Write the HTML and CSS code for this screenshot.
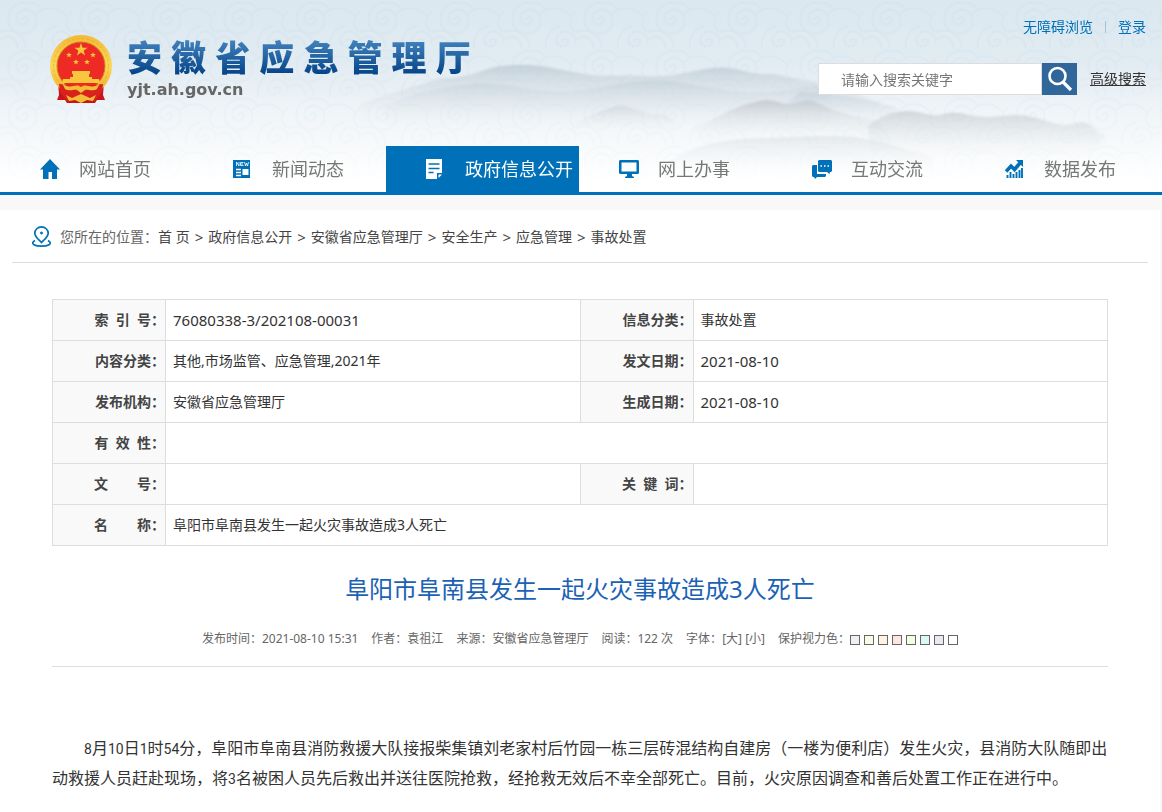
FILE: index.html
```html
<!DOCTYPE html>
<html lang="zh-CN">
<head>
<meta charset="utf-8">
<title>阜阳市阜南县发生一起火灾事故造成3人死亡</title>
<link rel="stylesheet" href="styles.css">
</head>
<body>
<header class="header">
  <svg class="scenery" viewBox="0 0 1162 192" preserveAspectRatio="xMidYMin slice" aria-hidden="true">
    <defs>
      <pattern id="swirl" width="72" height="48" patternUnits="userSpaceOnUse">
        <g fill="none" stroke="#cbdde8" stroke-width="2">
          <path d="M22 20c0-4 6-4 6 0s-8 7-11 1 4-13 11-11 11 10 7 17-15 9-22 3-6-20 3-25 22-3 27 6"/>
          <path d="M58 42c0-4 6-4 6 0s-8 7-11 1 4-13 11-11 8 8 8 12M42 48c-2-10 4-20 14-22M36 14c8-8 22-8 30 2"/>
          <path d="M0 40c6-6 16-4 18 8M0 32c10-4 24 0 26 16M72 32c-8-4-8-14 0-20"/>
        </g>
      </pattern>
      <linearGradient id="fadeSwirl" x1="0" y1="0" x2="0" y2="1">
        <stop offset="0" stop-color="#fff" stop-opacity=".3"/>
        <stop offset="1" stop-color="#fff" stop-opacity="0"/>
      </linearGradient>
      <mask id="swirlMask"><rect width="1162" height="192" fill="url(#fadeSwirl)"/></mask>
      <linearGradient id="far" x1="0" y1="0" x2="0" y2="1">
        <stop offset="0" stop-color="#bac8d2" stop-opacity=".75"/>
        <stop offset="1" stop-color="#eef2f5" stop-opacity="0"/>
      </linearGradient>
      <linearGradient id="near" x1="0" y1="0" x2="0" y2="1">
        <stop offset="0" stop-color="#b9c0c6" stop-opacity=".7"/>
        <stop offset="1" stop-color="#f4f6f7" stop-opacity="0"/>
      </linearGradient>
      <filter id="mist" x="-5%" y="-20%" width="110%" height="140%"><feGaussianBlur stdDeviation="1.2"/></filter>
    </defs>
    <rect width="1162" height="192" fill="url(#swirl)" mask="url(#swirlMask)"/>
    <g filter="url(#mist)">
      <path fill="url(#far)" d="M360 104C385 94 405 90 425 83S460 79 476 73 500 65 523 65 560 70 585 74 620 74 645 76 690 71 712 68 745 74 765 74 800 82 830 84L830 126H360Z"/>
      <path fill="url(#far)" opacity=".6" d="M385 106C410 92 440 88 470 84S540 96 580 90 650 76 690 84 760 96 800 88 860 98 895 108L905 130H385Z"/>
      <path fill="url(#near)" opacity=".55" d="M565 130C580 120 595 112 613 107S640 116 665 114L690 134Z"/>
      <path fill="url(#near)" d="M695 128C720 117 735 104 767 100 780 101 785 106 795 103S812 99 820 104 850 116 880 121L892 142H690Z"/>
      <path fill="url(#near)" opacity=".8" d="M868 126C880 116 895 111 908 111S930 118 945 114 970 118 990 117 1020 113 1040 119 1060 127 1076 123 1095 134 1105 136L1090 160H870Z"/>
      <path fill="url(#far)" opacity=".7" d="M800 92C840 94 865 98 895 108L900 126H760Z"/>
      <path fill="url(#near)" opacity=".38" d="M670 160C700 142 730 139 765 138S830 134 860 138 900 150 930 156L940 176H660Z"/>
    </g>
  </svg>
  <div class="banner">
    <a class="brand" href="#">
      <svg class="emblem" viewBox="0 0 64 68" aria-hidden="true">
        <defs><linearGradient id="gold" x1="0" y1="0" x2="0" y2="1"><stop offset="0" stop-color="#f3b936"/><stop offset=".5" stop-color="#fbd857"/><stop offset="1" stop-color="#eda825"/></linearGradient></defs>
        <path fill="#c91418" d="M9 47l1 13-2 5 8 0 2 3h28l2-3h8l-2-5 1-13z"/>
        <circle cx="32" cy="31" r="31" fill="url(#gold)"/>
        <circle cx="32" cy="31" r="27.500" fill="none" stroke="#dea02a" stroke-opacity=".5" stroke-width="1" stroke-dasharray="3 2"/>
        <circle cx="32" cy="31" r="24" fill="#ed2b24" stroke="#c9841b" stroke-width="1"/>
        <g fill="#f9c63d">
          <path d="M32 8l1.600 4.700h5l-4 3 1.500 4.800-4.100-2.900-4.100 2.900 1.500-4.800-4-3h5z"/>
          <path d="M20 17l.7 2h2.200l-1.700 1.400.6 2.200-1.800-1.300-1.800 1.300.6-2.200-1.700-1.400h2.200zM44 17l.7 2h2.200l-1.700 1.400.6 2.200-1.800-1.300-1.800 1.300.6-2.200-1.700-1.400h2.200zM27 24l.7 2h2.200l-1.700 1.400.6 2.200-1.800-1.300-1.800 1.300.6-2.200-1.700-1.400h2.200zM38 24l.7 2h2.200l-1.700 1.400.6 2.200-1.800-1.300-1.800 1.300.6-2.200-1.700-1.400h2.200z"/>
          <path d="M23 36h18v3h-1v3h3v2h7l1 4H13l1-4h7v-2h3v-3h-1z"/>
        </g>
        <path fill="#d9211e" d="M10 49l12 1 10 3 10-3 12-1-1 8-7 9-6-4-8 2-8-2-6 4-7-9z"/>
        <path fill="#f4bd36" d="M13 48c7 7 13 1 17 3l2 1 2-1c4-2 10 4 17-3l-3 6c-5 3-9 0-12 1l-4 3-4-3c-3-1-7 2-12-1zM17 60l6 3 9-4 9 4 6-3-3 6-6-1-6 3-6-3-6 1z"/>
      </svg>
      <span class="brand-text">
        <span class="brand-name">安 徽 省 应 急 管 理 厅</span>
        <span class="brand-domain">yjt.ah.gov.cn</span>
      </span>
    </a>
    <div class="tools">
      <div class="top-links"><a href="#">无障碍浏览</a><i class="bar"></i><a href="#">登录</a></div>
      <form class="search">
        <input class="search-box" type="text" placeholder="请输入搜索关键字" aria-label="请输入搜索关键字">
        <button class="search-btn" type="button" aria-label="搜索">
          <svg width="26" height="26" viewBox="0 0 26 26" fill="none" stroke="#fff"><circle cx="10.500" cy="10" r="8" stroke-width="2.600"/><path d="M16 16l8 8" stroke-width="3.200"/></svg>
        </button>
        <a class="advanced" href="#">高级搜索</a>
      </form>
    </div>
  </div>
  <nav class="nav">
    <a href="#"><svg viewBox="0 0 20 20" fill="currentColor"><path d="M10 0l10 10.500h-3V20h-5v-7H8.500v7H3v-9.500H0z"/></svg>网站首页</a>
    <a href="#"><svg viewBox="0 0 20 20"><path fill="currentColor" d="M0 1h17v18H0z"/><g fill="none" stroke="#fff"><path d="M3.500 7V3l2.500 4V3M10.500 3.500h-3v3h3M7.500 5h2.500M11.500 3l1 4 1-3 1 3 1-4" stroke-width=".8"/><path d="M3 10.500h5M3 13.500h5M3 16.500h5" stroke-width="1.300"/></g><path fill="#fff" d="M9.500 10h6v6h-6z"/></svg>新闻动态</a>
    <a class="active" href="#"><svg viewBox="0 0 20 20"><path fill="currentColor" d="M0 0h16v14h-5v6H0zM12.500 15.500H16L12.500 19z"/><path d="M2.500 5h11M2.500 9.500h11M2.500 13.500h5" stroke="#0071b8" stroke-width="1.500"/></svg>政府信息公开</a>
    <a href="#"><svg viewBox="0 0 20 20" fill="currentColor"><path fill-rule="evenodd" d="M1 1h18l1 1v12l-1 1h-6v2l2 1v1H6v-1l2-1v-2H1l-1-1V2zM2.500 3.500v9h15v-9z"/></svg>网上办事</a>
    <a href="#"><svg viewBox="0 0 20 20"><path fill="currentColor" d="M0 7l1-1h4v9h9v2l-1 1H5l-2 2-1-2H1l-1-1z"/><path fill="currentColor" d="M7 1h12l1 1v10l-1 1h-1l-.5 2-2.500-2H7l-1-1V2z"/><path d="M8.500 7h9" stroke="#fff" stroke-width="1.500" stroke-dasharray="1.500 2"/></svg>互动交流</a>
    <a href="#"><svg viewBox="0 0 20 20" fill="none" stroke="currentColor"><path d="M1 12.500l5-5.500 3.500 3.500L15 4" stroke-width="3.600"/><path d="M11 1h7v7z" fill="currentColor" stroke="none"/><path d="M2.500 19v-3M5.500 19v-6M8.500 19v-4M11.500 19v-6M14.500 19v-8M17 19V9" stroke-width="1.900"/></svg>数据发布</a>
  </nav>
</header>
<main class="page">
  <div class="crumbs">
    <svg width="20" height="22" viewBox="0 0 20 22" fill="none" stroke="#0071b8" stroke-width="1.700"><path d="M9.500 16.500C6 13 2.800 10.500 2.800 7.200a6.700 6.300 0 0 1 13.400 0c0 3.300-3.200 5.800-6.700 9.300z"/><circle cx="9.500" cy="7" r="1" fill="#0071b8" stroke-width="1"/><path d="M3 14.500c-6 3.500 1 5.700 6.500 5.700s12.500-2.200 6.500-5.700"/></svg>
    <span class="crumb-label">您所在的位置：</span>
    <a href="#">首 页</a><span class="sep">&gt;</span><a href="#">政府信息公开</a><span class="sep">&gt;</span><a href="#">安徽省应急管理厅</a><span class="sep">&gt;</span><a href="#">安全生产</a><span class="sep">&gt;</span><a href="#">应急管理</a><span class="sep">&gt;</span><a href="#">事故处置</a>
  </div>
  <article class="content">
    <table class="info">
      <colgroup><col class="c-label"><col><col class="c-label"><col></colgroup>
      <tr><th>索&nbsp; 引&nbsp; 号：</th><td class="num">76080338-3/202108-00031</td><th>信息分类：</th><td>事故处置</td></tr>
      <tr><th>内容分类：</th><td>其他,市场监管、应急管理,2021年</td><th>发文日期：</th><td class="num">2021-08-10</td></tr>
      <tr><th>发布机构：</th><td>安徽省应急管理厅</td><th>生成日期：</th><td class="num">2021-08-10</td></tr>
      <tr><th>有&nbsp; 效&nbsp; 性：</th><td colspan="3"></td></tr>
      <tr><th>文&nbsp;&nbsp;&nbsp;&nbsp;&nbsp;&nbsp;&nbsp; 号：</th><td></td><th>关&nbsp; 键&nbsp; 词：</th><td></td></tr>
      <tr><th>名&nbsp;&nbsp;&nbsp;&nbsp;&nbsp;&nbsp;&nbsp; 称：</th><td colspan="3">阜阳市阜南县发生一起火灾事故造成3人死亡</td></tr>
    </table>
    <h1 class="title">阜阳市阜南县发生一起火灾事故造成3人死亡</h1>
    <div class="meta">
      <span>发布时间：2021-08-10 15:31</span>
      <span>作者：袁祖江</span>
      <span>来源：安徽省应急管理厅</span>
      <span>阅读：122 次</span>
      <span>字体：<a href="#">[大]</a> <a href="#">[小]</a></span>
      <span class="eye">保护视力色：<span class="swatches"><button class="sw s1" aria-label="色1"></button><button class="sw s2" aria-label="色2"></button><button class="sw s3" aria-label="色3"></button><button class="sw s4" aria-label="色4"></button><button class="sw s5" aria-label="色5"></button><button class="sw s6" aria-label="色6"></button><button class="sw s7" aria-label="色7"></button><button class="sw s8" aria-label="色8"></button></span></span>
    </div>
    <p class="body-text"><span class="fig">8</span>月<span class="fig">10</span>日<span class="fig">1</span>时<span class="fig">54</span>分，阜阳市阜南县消防救援大队接报柴集镇刘老家村后竹园一栋三层砖混结构自建房（一楼为便利店）发生火灾，县消防大队随即出动救援人员赶赴现场，将<span class="fig">3</span>名被困人员先后救出并送往医院抢救，经抢救无效后不幸全部死亡。目前，火灾原因调查和善后处置工作正在进行中。</p>
  </article>
</main>
</body>
</html>
```
FILE: styles.css
```css
* { box-sizing: border-box; }
html { height: 100%; }
body {
  margin: 0;
  min-height: 100%;
  display: flex;
  flex-direction: column;
  background: #f8f8f8;
  color: #333;
  font: 14px/20px "Noto Sans", "Noto Sans CJK SC", sans-serif;
}
a { color: inherit; text-decoration: none; }
svg { flex: none; display: block; }

.header {
  position: relative;
  background: linear-gradient(#dbe8f0 0, #e1ebf2 60px, #f0f5f8 115px, #fff 180px);
  border-bottom: 3px solid #0071b8;
}
.scenery { position: absolute; left: 0; top: 0; width: 100%; height: 100%; }
.banner {
  position: relative;
  display: flex;
  justify-content: space-between;
  height: 146px;
  padding: 0 16px 0 49px;
}
.brand { display: flex; gap: 14px; padding-top: 35px; }
.emblem { width: 64px; height: 68px; }
.brand-text { display: flex; flex-direction: column; }
.brand-name {
  font-size: 35px;
  line-height: 46px;
  font-weight: 900;
  white-space: nowrap;
  color: transparent;
  background: linear-gradient(#3e7fba 15%, #054488 85%);
  -webkit-background-clip: text;
  background-clip: text;
}
.brand-domain { font: bold 16px/18px "DejaVu Sans", sans-serif; color: #666; }

.tools { display: flex; flex-direction: column; align-items: flex-end; gap: 26px; padding-top: 17px; }
.top-links { display: flex; align-items: center; gap: 12px; color: #0071b8; }
.bar { width: 1px; height: 12px; background: #a5c2d6; }
.search { display: flex; align-items: center; margin: 0; }
.search-box {
  width: 224px;
  height: 32px;
  padding: 0 22px;
  border: 1px solid #ddd;
  background: #fff;
  font: inherit;
  color: #333;
}
.search-box::placeholder { color: #757575; }
.search-btn {
  display: flex;
  align-items: center;
  justify-content: center;
  width: 35px;
  height: 32px;
  padding: 0;
  border: 0;
  background: #31669a;
}
.advanced { margin-left: 13px; text-decoration: underline; }

.nav { position: relative; display: grid; grid-template-columns: repeat(6, 1fr); padding-right: 4px; }
.nav a {
  display: flex;
  align-items: center;
  gap: 19px;
  height: 46px;
  padding-left: 40px;
  font-size: 18px;
  color: #777;
  white-space: nowrap;
}
.nav svg { width: 20px; height: 20px; color: #0071b8; }
.nav .active { background: #0071b8; color: #fff; }
.nav .active svg { color: #fff; }

.page { flex: 1; margin: 15px 2px 0 0; padding: 0 12px; background: #fff; }
.crumbs {
  display: flex;
  align-items: center;
  height: 53px;
  padding: 2px 0 0 20px;
  border-bottom: 1px solid #ddd;
  color: #444;
}
.crumb-label { margin-left: 8px; color: #666; }
.sep { padding: 0 5px; font-size: 15px; }

.content { padding: 36px 40px 0; }
.info { width: 100%; border-collapse: collapse; table-layout: fixed; }
.c-label { width: 113px; }
.info th, .info td { height: 41px; padding: 0; border: 1px solid #ddd; }
.info th { background: #f9f9f9; text-align: right; color: #444; font-weight: bold; }
.info td { padding-left: 7px; }
.info .num { font-size: 15px; }

.title { margin: 24px 0 0; text-align: center; font-size: 24px; line-height: 38px; font-weight: normal; color: #1b62b5; }
.meta {
  display: flex;
  justify-content: center;
  gap: 13px;
  padding: 21px 0 17px;
  border-bottom: 1px solid #ddd;
  font-size: 12px;
  color: #666;
}
.eye { display: flex; align-items: center; }
.swatches { display: flex; gap: 4px; padding-top: 2px; }
.sw { width: 10px; height: 10px; padding: 0; border: 1px solid #666; }
.s1 { background: #edf0f5; }
.s2 { background: #fafbe6; }
.s3 { background: #fff2e2; }
.s4 { background: #fde6e0; }
.s5 { background: #f3ffe1; }
.s6 { background: #dafaf3; }
.s7 { background: #eae9f0; }
.s8 { background: #fff; }
.body-text {
  margin: 65px 0 0;
  text-indent: 32px;
  font: 16px/30px "Noto Sans CJK SC", sans-serif;
}
.fig { font-family: Roboto, sans-serif; font-size: 14px; line-height: 16px; }
```
